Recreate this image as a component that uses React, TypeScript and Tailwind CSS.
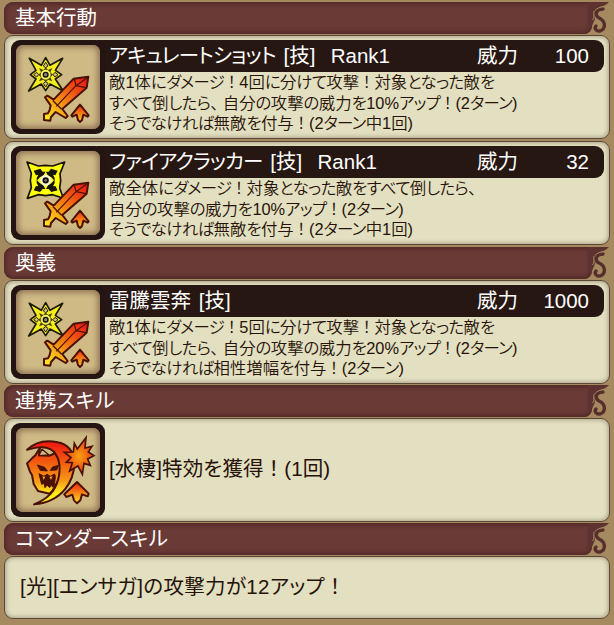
import type { ReactNode } from 'react'
import clsx from 'clsx'

type Skill = {
  name: string
  power: string
  icon: 'burst' | 'shuriken'
  lines: string[]
}

const basicSkills: Skill[] = [
  {
    name: 'アキュレートショット [技]  Rank1',
    power: '100',
    icon: 'burst',
    lines: [
      '敵1体にダメージ！4回に分けて攻撃！対象となった敵を',
      'すべて倒したら、自分の攻撃の威力を10%アップ！(2ターン)',
      'そうでなければ無敵を付与！(2ターン中1回)',
    ],
  },
  {
    name: 'ファイアクラッカー [技]  Rank1',
    power: '32',
    icon: 'shuriken',
    lines: [
      '敵全体にダメージ！対象となった敵をすべて倒したら、',
      '自分の攻撃の威力を10%アップ！(2ターン)',
      'そうでなければ無敵を付与！(2ターン中1回)',
    ],
  },
]

const ultimateSkill: Skill = {
  name: '雷騰雲奔 [技]',
  power: '1000',
  icon: 'burst',
  lines: [
    '敵1体にダメージ！5回に分けて攻撃！対象となった敵を',
    'すべて倒したら、自分の攻撃の威力を20%アップ！(2ターン)',
    'そうでなければ相性増幅を付与！(2ターン)',
  ],
}

// kana are set tighter than kanji, punctuation keeps about its full width
const GameText = ({ text, loose = false }: { text: string; loose?: boolean }) => (
  <>
    {text.split(/([ァ-ヺー]+|[ぁ-ゖ]+|！|、)/).map((run, i) => {
      if (run === '！') return <span key={i} className={clsx('inline-block text-center', loose ? 'w-[1em]' : 'w-[0.93em]')}>{run}</span>
      if (run === '、') return <span key={i} className="inline-block w-[0.75em]">{run}</span>
      if (!loose && /^[ァ-ヺー]/.test(run)) return <span key={i} className="tracking-[-0.042em]">{run}</span>
      if (!loose && /^[ぁ-ゖ]/.test(run)) return <span key={i} className="tracking-[-0.035em]">{run}</span>
      return <span key={i}>{run}</span>
    })}
  </>
)

const Gradients = () => (
  <svg className="absolute w-0 h-0" aria-hidden="true">
    <defs>
      <linearGradient id="blade" x1="245" y1="125" x2="125" y2="250" gradientUnits="userSpaceOnUse">
        <stop offset="0" stopColor="#f01414" />
        <stop offset="0.3" stopColor="#ee4a12" />
        <stop offset="0.6" stopColor="#f58a12" />
        <stop offset="1" stopColor="#ffe81c" />
      </linearGradient>
      <linearGradient id="arrow" x1="0" y1="208" x2="0" y2="262" gradientUnits="userSpaceOnUse">
        <stop offset="0" stopColor="#ee2412" />
        <stop offset="0.5" stopColor="#f57c14" />
        <stop offset="1" stopColor="#ffcf20" />
      </linearGradient>
      <linearGradient id="flame" x1="0" y1="85" x2="0" y2="262" gradientUnits="userSpaceOnUse">
        <stop offset="0" stopColor="#ee1c10" />
        <stop offset="0.35" stopColor="#f2620f" />
        <stop offset="0.65" stopColor="#f79c18" />
        <stop offset="0.85" stopColor="#ffee18" />
      </linearGradient>
      <radialGradient id="spark">
        <stop offset="0" stopColor="#f8a012" />
        <stop offset="1" stopColor="#ea3c10" />
      </radialGradient>
    </defs>
  </svg>
)

const UpArrow = () => (
  <path
    d="M225 209 L251 241 L248 245 L235 239 L231 255 L225 261 L219 255 L215 239 L202 245 L199 241 Z"
    fill="url(#arrow)"
    stroke="#4a1206"
    strokeWidth="6"
    strokeLinejoin="round"
  />
)

const Sword = () => (
  <g stroke="#4a1206" strokeWidth="6" strokeLinejoin="round">
    <path d="M250 125 L206 131 L146 194 L127 182 L120 187 L137 211 L134 225 L129 235 L117 237 L117 255 L136 257 L138 246 L152 231 L182 249 L188 243 L172 222 L245 158 Z" fill="url(#blade)" />
    <path d="M208 132 L213 152 L243 158 M213 152 L249 127 M213 152 L154 214" fill="none" strokeWidth="3.5" />
    <path d="M144 197 L170 223" fill="none" strokeWidth="4" />
  </g>
)

const Burst = () => (
  <g strokeLinejoin="round">
    <path d="M122 68 L135 91 L173 70 L151 106 L170 119 L151 132 L175 168 L135 147 L122 167 L109 147 L71 168 L93 132 L76 119 L93 106 L73 70 L109 91 Z" fill="#f4ee1c" stroke="#1c1a08" strokeWidth="5" />
    <path d="M122 82 L129 93 L122 98 L115 93 Z M122 156 L129 145 L122 140 L115 145 Z M86 119 L95 112 L101 119 L95 126 Z M159 119 L150 112 L144 119 L150 126 Z" fill="#d4bf83" stroke="#24200a" strokeWidth="3" />
    <path d="M122 97 L129 105 L142 99 L136 112 L144 119 L136 127 L142 139 L129 134 L122 142 L115 134 L102 139 L108 127 L100 119 L108 112 L102 99 L115 105 Z" fill="#4a450c" />
    <circle cx="122" cy="119" r="12" fill="#141006" stroke="#f2ee60" strokeWidth="6" />
    <circle cx="122" cy="119" r="5" fill="#8d887a" />
  </g>
)

const Shuriken = () => (
  <g transform="translate(0 -3)" strokeLinejoin="round">
    <path d="M66 66 L100 78 L121 76 L143 78 L179 66 L165 101 L167 122 L164 144 L175 175 L143 164 L122 167 L101 164 L67 175 L79 143 L76 121 L79 100 Z" fill="#ffff0a" stroke="#15130a" strokeWidth="5" />
    <path d="M86 92 L106 86 L113 95 L131 95 L138 86 L158 92 L151 106 L144 104 L149 114 L149 129 L144 139 L151 138 L158 151 L139 156 L131 147 L113 147 L105 156 L86 151 L93 138 L100 139 L95 129 L95 114 L100 104 L93 106 Z" fill="#17140a" />
    <path d="M122 94 L128 106 L139 112 L147 121 L139 130 L129 136 L122 149 L115 136 L105 130 L96 121 L105 112 L116 106 Z" fill="#fffc20" />
    <circle cx="122" cy="121" r="13" fill="#12100a" stroke="#f8f6d8" strokeWidth="7" />
    <circle cx="122" cy="121" r="4" fill="#77736b" />
  </g>
)

const Reaper = () => (
  <g transform="translate(0 -9)" stroke="#4a1206" strokeLinejoin="round">
    <g transform="translate(-9 -4)">
      <path d="M225 205 L260 240 L257 248 L240 242 L235 260 L225 269 L216 260 L211 243 L193 250 L187 242 Z" fill="url(#arrow)" strokeWidth="6" />
    </g>
    <path d="M105 98 L91 121 L81 130 L66 145 L75 170 L81 180 L86 207 L99 228 L134 236 L143 226 C168 190 174 150 151 114 L134 122 L102 121 Z" fill="url(#flame)" strokeWidth="6" />
    <path d="M66 104 C90 82 124 74 158 82 C190 88 210 112 208 148 C206 192 178 260 87 268 C128 252 150 230 160 192 C170 152 160 116 137 103 C116 92 90 98 66 104 Z" fill="url(#flame)" strokeWidth="6" />
    <path d="M101 122 L111 103 L132 120 Z" fill="#d0bb82" strokeWidth="4" />
    <path d="M97 150 L119 157 L127 168 L106 166 Z M136 166 L143 156 L160 151 L155 165 Z" fill="#4a1206" strokeWidth="3" />
    <path d="M102 176 L117 184 L126 178 L136 184 L149 177 L151 185 L148 213 L142 216 L139 207 L134 218 L126 210 L120 218 L117 205 L110 208 Z" fill="#4a1206" strokeWidth="3" />
    <path d="M112 184 L116 195 L121 185 Z M133 185 L138 195 L143 184 Z" fill="#f79c18" stroke="none" />
    <path d="M208 85 L217 102 L243 68 L240 99 L261 94 L250 111 L267 122 L248 132 L256 151 L237 145 L232 178 L219 153 L194 168 L202 143 L184 142 L198 128 L178 112 L205 111 Z" fill="url(#spark)" strokeWidth="5" strokeLinejoin="miter" />
  </g>
)

const SkillIcon = ({ type }: { type: 'burst' | 'shuriken' | 'reaper' }) => (
  <div className="relative grid w-[94px] h-[94px] shrink-0 place-items-center rounded-[9px] bg-[#241512]">
    <div className="col-start-1 row-start-1 w-[84px] h-[84px] rounded-[7px] bg-[#cfba85] shadow-[inset_0_0_6px_2px_#8a6c50]" />
    <svg className="col-start-1 row-start-1 z-10 w-[94px] h-[94px]" viewBox="18 15 282 282">
      {type === 'reaper' ? (
        <Reaper />
      ) : (
        <>
          {type === 'burst' ? <Burst /> : <Shuriken />}
          <Sword />
          <UpArrow />
        </>
      )}
    </svg>
  </div>
)

const SectionHeader = ({ children, className, titleClass }: { children: string; className?: string; titleClass?: string }) => (
  <div className={clsx('flex h-8 w-[605px] shrink-0', className)}>
    <h2 className={clsx('w-[588px] rounded-l-[9px] rounded-br-[8px] bg-[#693a36] pl-[11px] text-[20.5px] leading-[31px] text-white shadow-[inset_0_0_5px_1px_#4a2222]', titleClass)}>
      {children}
    </h2>
    <svg className="-ml-1 h-8 w-[21px] shrink-0" viewBox="0 0 21 32" fill="none">
      <path d="M0 0 H21 C18 4 13 4 9 7 C6 10 6 14 7 17 L4 24 H0 Z" fill="#5e3230" />
      <path d="M15 7 C8 7 6 13 11 16 C18 19 18 27 12 29 C8 29.500 6 26 8 24" stroke="#572e2c" strokeWidth="3.400" strokeLinecap="round" />
      <path d="M6.500 9 C9 6 12 5 16 4.500 M4.500 18 C7 15 5 13 6 9" stroke="#a58a60" strokeWidth="1" />
    </svg>
  </div>
)

const Panel = ({ children, className }: { children: ReactNode; className?: string }) => (
  <div className={clsx('flex w-[606px] shrink-0 rounded-[9px] border-[1.5px] border-[#5b4735] bg-[#e3dfc1] shadow-[inset_0_0_4px_1px_#aaa286]', className)}>
    {children}
  </div>
)

const SkillPanel = ({ skill, className }: { skill: Skill; className?: string }) => (
  <Panel className={clsx('h-[104px] pl-[6px] pt-1', className)}>
    <SkillIcon type={skill.icon} />
    <div className="-ml-2 w-[507px]">
      <div className="flex h-8 items-center rounded-r-[9px] bg-[#271712] pl-3 pr-[15px] text-[20.5px] leading-8 text-white">
        <span className="flex-1 whitespace-pre [word-spacing:2px]"><GameText text={skill.name} /></span>
        <span>威力</span>
        <span className="w-[71px] text-right">{skill.power}</span>
      </div>
      <div className="pl-3 text-[16.4px] font-[350] leading-[20.5px] text-[#271208]">
        {skill.lines.map((line) => (
          <p key={line} className="whitespace-nowrap"><GameText text={line} /></p>
        ))}
      </div>
    </div>
  </Panel>
)

const App = () => (
  <main className="relative flex h-[625px] w-[614px] flex-col overflow-hidden bg-[#a58a60] pl-1 pt-[2px] [font-family:'Liberation_Sans','Noto_Sans_CJK_JP',sans-serif] [font-feature-settings:'palt']">
    <Gradients />
    <SectionHeader>基本行動</SectionHeader>
    <SkillPanel skill={basicSkills[0]} className="mt-px" />
    <SkillPanel skill={basicSkills[1]} className="mt-[2px]" />

    <SectionHeader className="mt-[2px]">奥義</SectionHeader>
    <SkillPanel skill={ultimateSkill} className="mt-px" />

    <SectionHeader className="mt-px" titleClass="tracking-[0.4px]">連携スキル</SectionHeader>
    <Panel className="mt-px h-[104px] pl-[6px] pt-1">
      <SkillIcon type="reaper" />
      <p className="mt-[30px] whitespace-nowrap pl-1 text-[20.5px] leading-8 tracking-[0.15px] text-[#271208]">
        <GameText text="[水棲]特効を獲得！(1回)" loose />
      </p>
    </Panel>

    <SectionHeader className="mt-px" titleClass="tracking-[0.3px]">コマンダースキル</SectionHeader>
    <Panel className="mt-px h-[63px] items-center pb-[2px] pl-[15px]">
      <p className="whitespace-nowrap text-[20.5px] leading-8 tracking-[0.35px] text-[#271208]">
        <GameText text="[光][エンサガ]の攻撃力が12アップ！" loose />
      </p>
    </Panel>
  </main>
)

export default App
